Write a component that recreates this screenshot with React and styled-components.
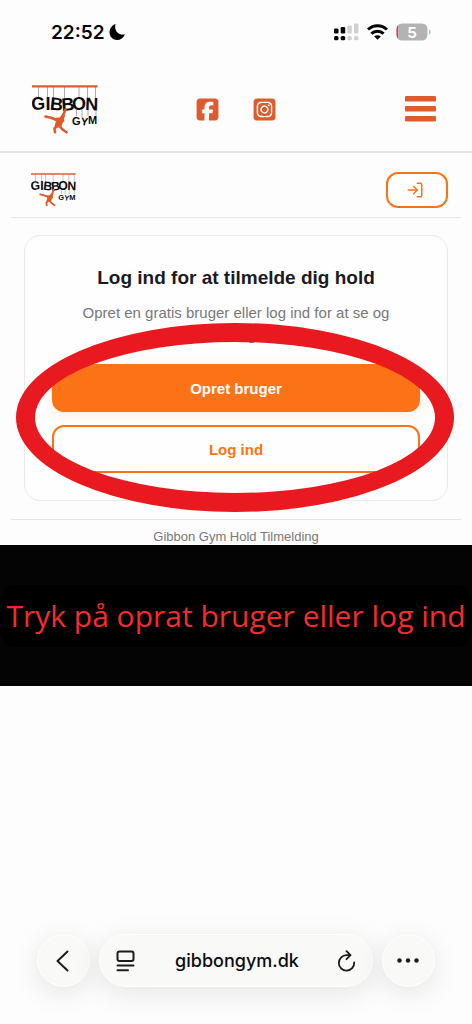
import React from 'react';
import styled, { createGlobalStyle } from 'styled-components';
import { FaSquareFacebook, FaSquareInstagram } from 'react-icons/fa6';
import { LogIn } from 'lucide-react';

const GlobalStyle = createGlobalStyle`
  * {
    box-sizing: border-box;
  }
  body {
    margin: 0;
    background: #fdfdfd;
    font-family: "Liberation Sans", Arial, sans-serif;
  }
`

const Page = styled.div`
  display: flex;
  flex-direction: column;
  min-height: 100vh;
`

const StatusBar = styled.div`
  display: flex;
  justify-content: space-between;
  align-items: center;
  height: 64px;
  padding: 0 41px 0 51px;
`

const Clock = styled.div`
  display: flex;
  align-items: center;
  gap: 4px;
  font-family: Inter, sans-serif;
  font-size: 19px;
  font-weight: 600;
  color: #000;
`

const StatusIcons = styled.div`
  display: flex;
  align-items: center;
  gap: 8px;
`

const BatteryText = styled.text`
  font-family: Inter, sans-serif;
  font-size: 15px;
  font-weight: 700;
`

const SiteHeader = styled.header`
  display: grid;
  grid-template-columns: 1fr auto 1fr;
  align-items: center;
  height: 89px;
  padding: 3px 32px 0;
  border-bottom: 2px solid #e3e4e8;
`

const SocialLinks = styled.nav`
  display: flex;
  gap: 32px;
`

const SocialLink = styled.a`
  display: flex;
  color: #dd5b2c;
`

const IconButton = styled.button`
  display: flex;
  justify-self: end;
  padding: 4px;
  border: none;
  background: none;
  color: #dd5b2c;
`

const LogoText = styled.text`
  font-family: "Liberation Sans", Arial, sans-serif;
  font-size: ${props => props.$size}px;
  font-weight: 700;
`

const Booking = styled.main`
  padding: 0 11px;
`

const BookingHeader = styled.div`
  display: flex;
  justify-content: space-between;
  align-items: center;
  height: 65px;
  padding: 19px 13px 9px 20px;
  border-bottom: 1px solid #ece9e5;
`

const LoginButton = styled.button`
  display: flex;
  justify-content: center;
  align-items: center;
  width: 62px;
  height: 36px;
  padding: 0 5px 0 0;
  border: 2px solid #fb7316;
  border-radius: 12px;
  background: #fff;
  color: #fb7316;
`

const Card = styled.section`
  position: relative;
  display: flex;
  flex-direction: column;
  margin: 17px 13px 18px;
  padding: 30px 27px 27px;
  border: 1px solid #ece9e5;
  border-radius: 16px;
  background: #fefefe;
  text-align: center;
`

const Title = styled.h1`
  margin: 0 0 12px;
  font-size: 19px;
  line-height: 24px;
  color: #1b1b1d;
`

const Intro = styled.p`
  margin: 0 0 18px;
  padding: 0 24px;
  font-size: 15px;
  line-height: 22px;
  color: #78787a;
`

const ActionButton = styled.button`
  height: 48px;
  border: 2px solid #fb7316;
  border-radius: 12px;
  background: ${props => props.$primary ? '#fb7316' : '#fefefe'};
  box-shadow: ${props => props.$primary ? '0 4px 14px rgba(251, 115, 22, 0.12)' : 'none'};
  color: ${props => props.$primary ? '#fff' : '#fb7316'};
  font-family: inherit;
  font-size: 15px;
  font-weight: 700;

  & + & {
    margin-top: 13px;
  }
`

const Marker = styled.div`
  position: absolute;
  top: 87px;
  right: -7px;
  bottom: -12px;
  left: -9px;
  border: 19px solid #e8191f;
  border-radius: 50%;
  pointer-events: none;
`

const Footer = styled.footer`
  height: 26px;
  padding-top: 9px;
  border-top: 1px solid #e6e4e2;
  font-size: 13px;
  line-height: 16px;
  color: #78787a;
  text-align: center;
`

const Caption = styled.div`
  padding: 40px 0 39px;
  background: #040404;
`

const CaptionText = styled.p`
  margin: 0;
  border-radius: 16px;
  background: #000;
  font-family: "Open Sans", sans-serif;
  font-size: 30px;
  font-weight: 400;
  line-height: 62px;
  color: #f62b2e;
  text-align: center;
  white-space: nowrap;
`

const BrowserBar = styled.div`
  display: flex;
  gap: 9px;
  margin-top: auto;
  padding: 0 37px 37px;
`

const RoundButton = styled.button`
  display: flex;
  justify-content: center;
  align-items: center;
  flex: none;
  width: 53px;
  height: 53px;
  padding: 0 2px 0 0;
  border: 1px solid #fff;
  border-radius: 50%;
  background: #f9f9f8;
  box-shadow: 0 6px 28px rgba(0, 0, 0, 0.1);
`

const AddressBar = styled.div`
  display: flex;
  justify-content: space-between;
  align-items: center;
  flex: 1;
  height: 53px;
  padding: 0 12px 0 16px;
  border: 1px solid #fff;
  border-radius: 27px;
  background: #f9f9f8;
  box-shadow: 0 6px 28px rgba(0, 0, 0, 0.1);
  font-family: Inter, sans-serif;
  font-size: 18px;
  font-weight: 500;
  color: #0c0c0c;
`

const SiteName = styled.span`
  padding-left: 6px;
`

function Logo({ width }) {
  return (
    <svg width={width} viewBox="0 0 66 49" role="img" aria-label="Gibbon Gym">
      <path d="M0 1.4h65.500" stroke="#dd5b2c" strokeWidth="2.2" />
      <path
        d="M6.500 2v11M15.500 2v11M21.500 2v11M32.500 2v12M47 2v11M55.500 2v11M63.500 2v11M44.500 25v6M50 25v7M56 25v6M64 25v6"
        stroke="#777"
        strokeWidth="0.6"
      />
      <LogoText $size={18} x="-0.500 13.500 17.500 30 40 53" y="25 25 24.500 26 25 25" rotate="-3 0 6 -5 0 2" fill="#0b0b0b">GIBBON</LogoText>
      <LogoText $size={11} x="40 48.500 56" y="40 40 39" rotate="0 6 0" fill="#0b0b0b">GYM</LogoText>
      <g fill="none" stroke="#dd5b2c" strokeWidth="2.600" strokeLinecap="round" strokeLinejoin="round">
        <path d="M33.500 24.500L30 33M27 36L19 32.800 13.500 31.500" />
        <path d="M25.500 40.500L22.500 43.500 23 47.300M27 40.500L30.500 44.500 34.500 47.300" />
      </g>
      <path d="M21.500 33l6-.5 3.500-4 2.200 1.500-1.200 4 .3 2.200-1.500 1.500-1.800 4.500-6 .5-.3-2.500 1.200-3.700z" fill="#dd5b2c" />
    </svg>
  )
}

function StatusBarRow() {
  return (
    <StatusBar>
      <Clock>
        22:52
        <svg width="17" height="18" viewBox="0 0 17 18" aria-hidden="true">
          <path d="M6.500 1C5 7 8.500 12.500 16 11.500 14.500 15 11.500 17 8 17 4 17 .5 13.500.5 9.500.5 5.500 3 2.200 6.500 1z" fill="#000" />
        </svg>
      </Clock>
      <StatusIcons>
        <svg width="25" height="18" viewBox="0 0 25 18" aria-hidden="true">
          <rect x="0" y="5.500" width="4.500" height="5" rx="1.200" />
          <rect x="6.700" y="4" width="4.500" height="6.500" rx="1.200" />
          <rect x="13.300" y="2.500" width="4.500" height="8" rx="1.200" fill="#d0d0d0" />
          <rect x="20" y="0.500" width="4.500" height="10" rx="1.200" fill="#d0d0d0" />
          <rect x="0" y="13" width="4.500" height="4.300" rx="1.500" />
          <rect x="6.700" y="13" width="4.500" height="4.300" rx="1.500" />
          <rect x="13.300" y="13" width="4.500" height="4.300" rx="1.500" fill="#d0d0d0" />
          <rect x="20" y="13" width="4.500" height="4.300" rx="1.500" fill="#d0d0d0" />
        </svg>
        <svg width="21" height="16" viewBox="0 0 21 16" fill="none" stroke="#000" strokeWidth="3" aria-hidden="true">
          <path d="M1 5.500a13.600 13.600 0 0 1 19 0" />
          <path d="M4.400 9.700a8.800 8.800 0 0 1 12.200 0" />
          <path d="M10.500 15.800l-3.300-3.300a4.700 4.700 0 0 1 6.600 0z" fill="#000" stroke="none" />
        </svg>
        <svg width="35" height="18" viewBox="0 0 35 18" role="img" aria-label="Battery 5%">
          <clipPath id="battery">
            <rect x="0.500" y="0.500" width="31" height="17" rx="5.500" />
          </clipPath>
          <g clipPath="url(#battery)">
            <rect width="32" height="18" fill="#b3b3b3" />
            <rect width="2" height="18" fill="#ef3b45" />
          </g>
          <path d="M33 6.500c2.200.8 2.200 4.200 0 5z" fill="#b3b3b3" />
          <BatteryText x="16" y="14.500" textAnchor="middle" fill="#fff">5</BatteryText>
        </svg>
      </StatusIcons>
    </StatusBar>
  )
}

function App() {
  return (
    <Page>
      <GlobalStyle />
      <StatusBarRow />
      <SiteHeader>
        <Logo width={66} />
        <SocialLinks>
          <SocialLink href="#facebook" aria-label="Facebook"><FaSquareFacebook size={25} /></SocialLink>
          <SocialLink href="#instagram" aria-label="Instagram"><FaSquareInstagram size={25} /></SocialLink>
        </SocialLinks>
        <IconButton type="button" aria-label="Menu">
          <svg width="31" height="26" viewBox="0 0 31 26" fill="currentColor">
            <rect y="0" width="31" height="5.500" rx="1.200" />
            <rect y="10" width="31" height="5.500" rx="1.200" />
            <rect y="20" width="31" height="5.500" rx="1.200" />
          </svg>
        </IconButton>
      </SiteHeader>
      <Booking>
        <BookingHeader>
          <Logo width={45} />
          <LoginButton type="button" aria-label="Log ind">
            <LogIn size={18} />
          </LoginButton>
        </BookingHeader>
        <Card>
          <Title>Log ind for at tilmelde dig hold</Title>
          <Intro>Opret en gratis bruger eller log ind for at se og tilmelde dig hold.</Intro>
          <ActionButton type="button" $primary>Opret bruger</ActionButton>
          <ActionButton type="button">Log ind</ActionButton>
          <Marker />
        </Card>
        <Footer>Gibbon Gym Hold Tilmelding</Footer>
      </Booking>
      <Caption>
        <CaptionText>Tryk på oprat bruger eller log ind</CaptionText>
      </Caption>
      <BrowserBar>
        <RoundButton type="button" aria-label="Back">
          <svg width="14" height="22" viewBox="0 0 14 22" fill="none" stroke="#1c1c1c" strokeWidth="2" strokeLinecap="round" strokeLinejoin="round">
            <path d="M11.500 1.500L1.500 11l10 9.500" />
          </svg>
        </RoundButton>
        <AddressBar>
          <svg width="19" height="22" viewBox="0 0 19 22" fill="none" stroke="#1c1c1c" strokeWidth="2" strokeLinecap="round" aria-hidden="true">
            <rect x="1.500" y="1.500" width="16" height="9.500" rx="2" />
            <path d="M1.500 15.500h16M1.500 20.200h10.500" />
          </svg>
          <SiteName>gibbongym.dk</SiteName>
          <IconButton type="button" aria-label="Reload">
            <svg width="19" height="22" viewBox="0 0 19 22" fill="none" stroke="#1c1c1c" strokeWidth="1.800" strokeLinecap="round" strokeLinejoin="round">
              <path d="M13 5.200H9.500a7.700 7.700 0 1 0 7.700 7.300" />
              <path d="M9.500 1.200l4 4-4 4" />
            </svg>
          </IconButton>
        </AddressBar>
        <RoundButton type="button" aria-label="More">
          <svg width="22" height="5" viewBox="0 0 22 5" fill="#1c1c1c">
            <circle cx="2.500" cy="2.500" r="2.200" />
            <circle cx="11" cy="2.500" r="2.200" />
            <circle cx="19.500" cy="2.500" r="2.200" />
          </svg>
        </RoundButton>
      </BrowserBar>
    </Page>
  )
}

export default App;
